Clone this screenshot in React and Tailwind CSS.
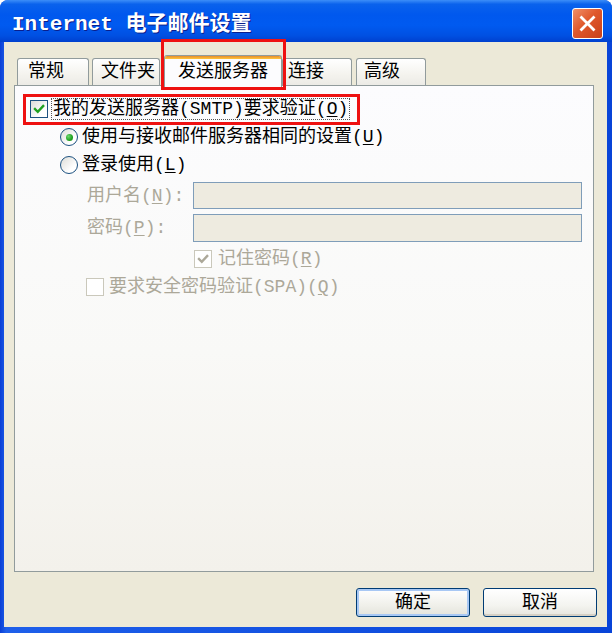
import React from 'react';

const FONT = '"Liberation Mono","Noto Sans CJK SC",monospace';

const Check = ({ color = '#21A121' }) => (
  <svg width="12" height="12" viewBox="0 0 12 12" className="block">
    <path d="M2 6 L4.8 8.8 L10.2 3" fill="none" stroke={color} strokeWidth="2.4" strokeLinecap="square" />
  </svg>
);

const Checkbox = ({ checked, disabled }) => (
  <span
    className={`w-[18px] h-[18px] flex items-center justify-center shrink-0 border ${
      disabled
        ? 'border-[#CAC8BB] bg-white'
        : 'border-[#1C5180] bg-[linear-gradient(135deg,#DCDCD7_0%,#FFFFFF_70%)]'
    }`}
  >
    {checked && <Check color={disabled ? '#ACA899' : '#21A121'} />}
  </span>
);

const Radio = ({ checked }) => (
  <span className="w-[18px] h-[18px] rounded-full border border-[#1C5180] bg-[linear-gradient(135deg,#DCDCD7_0%,#FFFFFF_70%)] flex items-center justify-center shrink-0">
    {checked && (
      <span className="w-[7px] h-[7px] rounded-full bg-[radial-gradient(circle_at_35%_35%,#6CD86C_0%,#21A121_60%,#1A8C1A_100%)]" />
    )}
  </span>
);

const Key = ({ k }) => (
  <span>
    (<u className="underline-offset-2">{k}</u>)
  </span>
);

const Tab = ({ label, className }) => (
  <div
    className={`h-[27px] rounded-t-[3px] border border-b-0 border-[#919B9C] bg-[linear-gradient(to_bottom,#FFFFFF_0%,#F4F3EE_60%,#ECEBE6_100%)] text-[18px] leading-[26px] text-black ${className}`}
  >
    {label}
  </div>
);

const XpButton = ({ label, primary }) => (
  <button
    className={`w-[114px] h-[29px] rounded-[3px] border border-[#003C74] text-[18px] leading-none text-black ${
      primary
        ? 'bg-[linear-gradient(to_bottom,#FFFFFF_0%,#F0F0EA_60%,#E3E3DB_100%)] shadow-[inset_0_0_0_2px_#A8C8F4]'
        : 'bg-[linear-gradient(to_bottom,#FFFFFF_0%,#F4F4F0_60%,#E6E5DE_100%)] shadow-[inset_0_-2px_0_#D6D0C5]'
    }`}
  >
    {label}
  </button>
);

export default function App() {
  return (
    <div
      className="relative w-[612px] h-[633px] rounded-t-[8px] overflow-hidden bg-[linear-gradient(to_right,#0A3FD6_0%,#1E5FEA_1%,#0844D8_100%)] flex flex-col"
      style={{ fontFamily: FONT }}
    >
      {/* Title bar */}
      <div className="h-[42px] shrink-0 flex items-center justify-between pl-[12px] pr-[9px] bg-[linear-gradient(to_bottom,#3C8EF8_0%,#0A62EC_10%,#0058EE_35%,#005AF0_60%,#0050E2_85%,#0040CE_100%)]">
        <span className="text-white text-[21px] font-bold leading-none [text-shadow:1px_1px_0_#0A1E8C] mt-[7px]">
          Internet 电子邮件设置
        </span>
        <div className="w-[31px] h-[31px] rounded-[3px] border border-white bg-[linear-gradient(135deg,#F0906A_0%,#E0582C_45%,#C8401A_100%)] flex items-center justify-center mt-[8px] self-start">
          <svg width="17" height="17" viewBox="0 0 17 17">
            <path d="M2.5 2.5 L14.5 14.5 M14.5 2.5 L2.5 14.5" stroke="#FFFFFF" strokeWidth="2.8" strokeLinecap="square" />
          </svg>
        </div>
      </div>

      {/* Body */}
      <div className="ml-[4px] mr-[5px] h-[585px] bg-[#ECE9D8] flex flex-col">
        {/* Tabs */}
        <div className="relative z-10 h-[45px] flex items-end pl-[13px] -mb-[2px]">
          <Tab label="常规" className="w-[72px] pl-[10px] mb-[2px]" />
          <Tab label="文件夹" className="w-[68px] pl-[8px] ml-[3px] mb-[2px]" />
          <div className="relative ml-[4px] w-[118px] h-[32px] rounded-t-[3px] border border-b-0 border-[#919B9C] bg-[#FCFCFE] text-[18px] leading-[30px] text-black text-center overflow-hidden">
            <div className="absolute left-0 right-0 top-0 h-[3px] bg-[linear-gradient(to_bottom,#E68B2C,#FFC73C)]" />
            <span className="relative top-[1px]">发送服务器</span>
          </div>
          <Tab label="连接" className="w-[70px] pl-[5px] mb-[2px]" />
          <Tab label="高级" className="w-[70px] pl-[7px] ml-[4px] mb-[2px]" />
        </div>

        {/* Tab page */}
        <div className="ml-[10px] w-[580px] h-[487px] border border-[#919B9C] bg-[linear-gradient(to_bottom,#FCFCFE_0%,#F9F9F7_55%,#F3F1EB_100%)] text-[18px] leading-none flex flex-col">
          <div className="mt-[9px] h-[28px] flex items-center pl-[15px] text-black">
            <Checkbox checked />
            <span className="ml-[3px] px-[1px] py-[1px] border border-dotted border-[#555]">
              我的发送服务器(SMTP)要求验证<Key k="O" />
            </span>
          </div>
          <div className="h-[28px] flex items-center pl-[45px] text-black">
            <Radio checked />
            <span className="ml-[4px]">
              使用与接收邮件服务器相同的设置<Key k="U" />
            </span>
          </div>
          <div className="h-[28px] flex items-center pl-[45px] text-black">
            <Radio />
            <span className="ml-[4px]">
              登录使用<Key k="L" />
            </span>
          </div>
          <div className="mt-[3px] h-[27px] flex items-center pl-[72px] text-[#ACA899]">
            <span className="w-[106px]">
              用户名<Key k="N" />:
            </span>
            <div className="w-[389px] h-[27px] border border-[#7F9DB9] bg-[#EEEBE0]" />
          </div>
          <div className="mt-[5px] h-[28px] flex items-center pl-[72px] text-[#ACA899]">
            <span className="w-[106px]">
              密码<Key k="P" />:
            </span>
            <div className="w-[389px] h-[28px] border border-[#7F9DB9] bg-[#EEEBE0]" />
          </div>
          <div className="mt-[3px] h-[28px] flex items-center pl-[179px] text-[#ACA899]">
            <Checkbox checked disabled />
            <span className="ml-[6px]">
              记住密码<Key k="R" />
            </span>
          </div>
          <div className="h-[28px] flex items-center pl-[71px] text-[#ACA899]">
            <Checkbox disabled />
            <span className="ml-[5px]">
              要求安全密码验证(SPA)<Key k="Q" />
            </span>
          </div>
        </div>

        {/* Buttons */}
        <div className="mt-[16px] flex justify-end gap-[13px] pr-[10px]">
          <XpButton label="确定" primary />
          <XpButton label="取消" />
        </div>
      </div>

      {/* Red annotation boxes */}
      <div className="absolute left-[161px] top-[39px] w-[125px] h-[51px] border-[3px] border-[#EE1111] z-20" />
      <div className="absolute left-[23px] top-[94px] w-[337px] h-[31px] border-[3px] border-[#EE1111] z-20" />
    </div>
  );
}
